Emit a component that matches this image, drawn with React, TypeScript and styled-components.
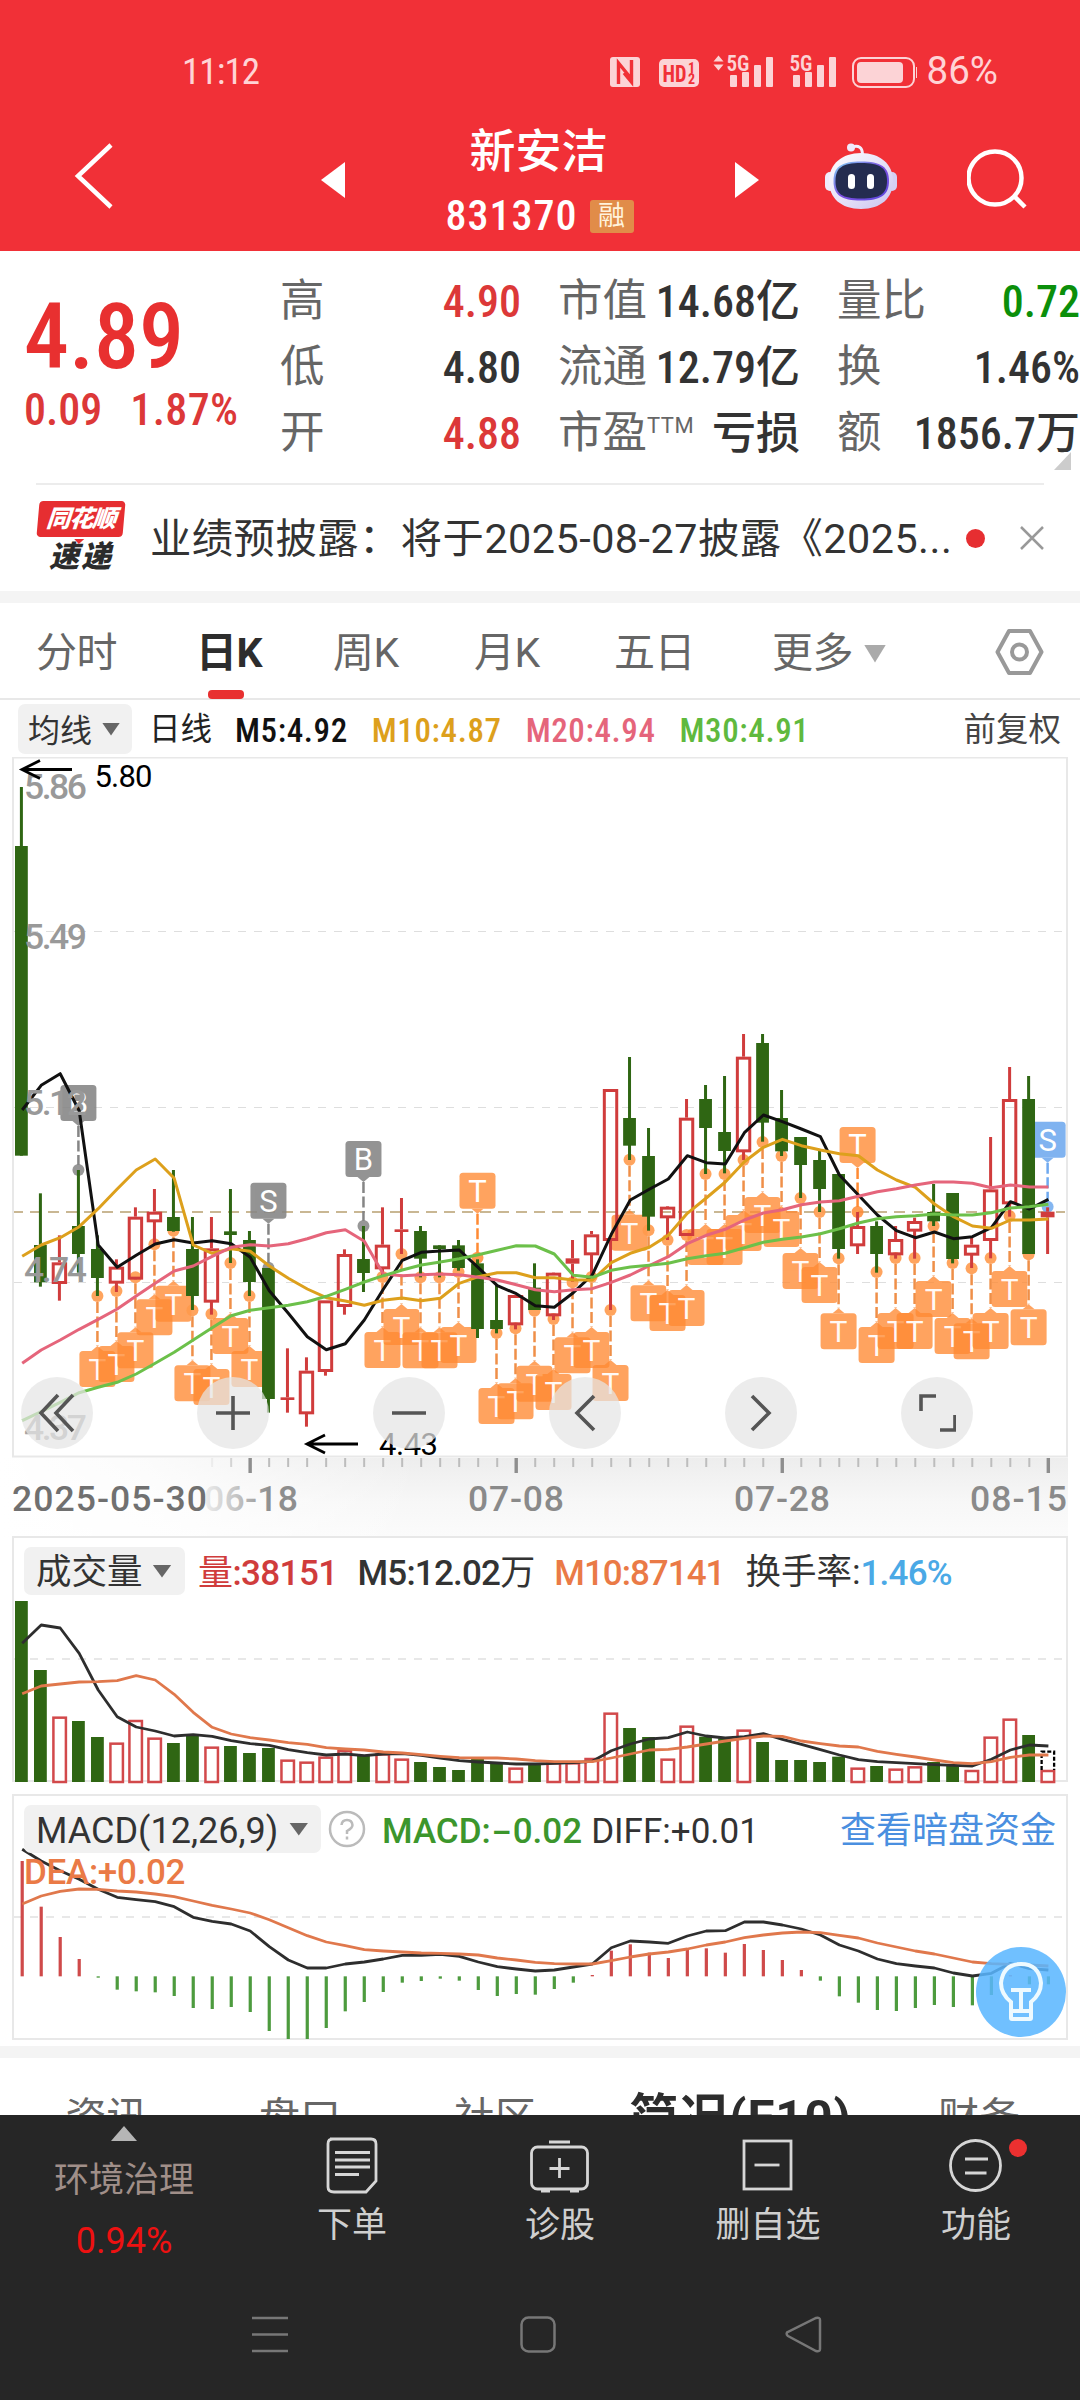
import React from "react";
import styled, { createGlobalStyle } from "styled-components";

const GlobalStyle = createGlobalStyle`
  * { box-sizing: border-box; }
  html, body { margin: 0; padding: 0; background: #fff; }
  svg { display: block; flex: none; }
`;

const NUM = `"Roboto Condensed", Roboto, "Noto Sans CJK SC", sans-serif`;
const SANS = `Roboto, "Noto Sans CJK SC", sans-serif`;

/* ---------- shared ---------- */

const Screen = styled.div`
  width: 1080px;
  height: 2400px;
  overflow: hidden;
  display: flex;
  flex-direction: column;
  background: #fff;
  color: #333;
  font-family: ${SANS};
  & > * { flex: none; }
`;

const Label = styled.span<{ $size: number; $color?: string; $weight?: number; $ls?: number; $ml?: number; $cond?: boolean }>`
  font-family: ${(p) => (p.$cond ? NUM : SANS)};
  font-stretch: ${(p) => (p.$cond ? "75%" : "100%")};
  font-size: ${(p) => p.$size}px;
  line-height: 1;
  color: ${(p) => p.$color ?? "inherit"};
  font-weight: ${(p) => p.$weight ?? 400};
  letter-spacing: ${(p) => p.$ls ?? 0}px;
  margin-left: ${(p) => p.$ml ?? 0}px;
  white-space: nowrap;
`;

const Regular = styled.span`
  font-weight: 400;
`;

const Dash = styled.span`
  display: inline-block;
  transform: scaleX(1.7);
  margin: 0 5px;
`;

const Band = styled.div`
  height: 12px;
  background: #f4f4f4;
`;

const Caret = styled.i<{ $w: number; $h: number; $color: string }>`
  width: ${(p) => p.$w}px;
  height: ${(p) => p.$h}px;
  background: ${(p) => p.$color};
  clip-path: polygon(0 0, 100% 0, 50% 100%);
`;

/* ---------- header ---------- */

const Header = styled.header`
  height: 251px;
  background: #f13037;
  color: #fff;
`;

const StatusBar = styled.div`
  height: 112px;
  padding: 31px 82px 0 182px;
  display: flex;
  justify-content: space-between;
  align-items: center;
  color: #ffd3d5;
`;

const StatusRight = styled.div`
  display: flex;
  align-items: center;
  gap: 10px;
`;

const TitleRow = styled.div`
  height: 139px;
  display: grid;
  grid-template-columns: 321px 24px 390px 24px 66px 73px 69px 60px;
  align-items: center;
`;

const BackSlot = styled.div`
  padding-left: 74px;
  padding-bottom: 11px;
`;

const IconSlot = styled.div<{ $pb?: number }>`
  padding-bottom: ${(p) => p.$pb ?? 0}px;
`;

const TitleBlock = styled.div`
  height: 139px;
  padding: 16px 3px 0 0;
  display: flex;
  flex-direction: column;
  align-items: center;
`;

const CodeLine = styled.div`
  height: 36px;
  margin-top: 24px;
  margin-left: 2px;
  display: flex;
  align-items: center;
  gap: 12px;
`;

const MarginTag = styled.span`
  width: 44px;
  height: 33px;
  border-radius: 3px;
  background: #e18c49;
  color: #fff3dc;
  font-size: 27px;
  line-height: 32px;
  text-align: center;
`;

const StatusIcons = () => (
  <svg width="308" height="46" viewBox="607 48 308 46" fill="#fcd3d6" fontFamily={NUM}>
    <rect x="608" y="56" width="30" height="30" rx="3" />
    <path d="M616.5 83V62L629.500 78M629.500 59V81L622 72" fill="none" stroke="#f13037" strokeWidth="3.400" />
    <rect x="657" y="58" width="40" height="28" rx="5" />
    <text x="660.500" y="80.500" fontSize="23" fontWeight="700" fill="#f13037" textLength="24" lengthAdjust="spacingAndGlyphs">HD</text>
    <text x="686" y="71.500" fontSize="14" fontWeight="700" fill="#f13037">1</text>
    <text x="686" y="83" fontSize="14" fontWeight="700" fill="#f13037">2</text>
    <path d="M711.500 60.500h10l-5-6zM711.500 63.500h10l-5 6z" />
    <text x="724.500" y="69.500" fontSize="22" fontWeight="600" textLength="23" lengthAdjust="spacingAndGlyphs">5G</text>
    <text x="787.500" y="69.500" fontSize="22" fontWeight="600" textLength="23" lengthAdjust="spacingAndGlyphs">5G</text>
    {[728, 791].map((x) => (
      <g key={x}>
        <rect x={x} y="74" width="7" height="12" rx="1" />
        <rect x={x + 12} y="71" width="7" height="15" rx="1" />
        <rect x={x + 24} y="64" width="7" height="22" rx="1" />
        <rect x={x + 36} y="56" width="7" height="30" rx="1" />
      </g>
    ))}
    <rect x="851" y="57" width="61" height="29" rx="8" fill="none" stroke="#fcd3d6" strokeWidth="2" />
    <rect x="855" y="61" width="46" height="21" rx="4" />
    <rect x="914" y="66" width="2" height="11" />
  </svg>
);

const Robot = () => (
  <svg width="73" height="70" viewBox="825 142 73 70">
    <defs>
      <linearGradient id="shell" x1="0" y1="0" x2="1" y2="1">
        <stop offset="0" stopColor="#ffffff" />
        <stop offset="0.600" stopColor="#e2ddf7" />
        <stop offset="1" stopColor="#c9c2ee" />
      </linearGradient>
      <linearGradient id="visor" x1="0" y1="0" x2="1" y2="1">
        <stop offset="0" stopColor="#7fd4f5" />
        <stop offset="0.500" stopColor="#7d4fe0" />
        <stop offset="1" stopColor="#5a49dd" />
      </linearGradient>
    </defs>
    <path d="M852 147Q862 144 862.500 154" fill="none" stroke="#f3effd" strokeWidth="3" />
    <circle cx="851" cy="147.500" r="4" fill="#efeafc" />
    <rect x="825" y="172" width="10" height="19" rx="5" fill="#efecfb" />
    <rect x="887" y="172" width="10" height="19" rx="5" fill="#d5cff3" />
    <path d="M861 153C880 153 893 164 893 181S881 209 861 209S829 198 829 181S842 153 861 153Z" fill="url(#shell)" />
    <path d="M861 161.500C881 161.500 889 167 889 181S881 200.500 861 200.500S833.500 195 833.500 181S841 161.500 861 161.500Z" fill="url(#visor)" />
    <path d="M861 163C880 163 887 168 887 181S880 198.500 861 198.500S835.500 194 835.500 181S842 163 861 163Z" fill="#242c50" />
    <rect x="848" y="174" width="7" height="15" rx="3.500" fill="#fff" />
    <rect x="867" y="174" width="7" height="15" rx="3.500" fill="#fff" />
  </svg>
);

/* ---------- quote ---------- */

const Quote = styled.section`
  height: 232px;
  padding: 17px 0 0 24px;
  display: grid;
  grid-template-columns: 256px 241px 279px 242px;
`;

const PriceBlock = styled.div`
  display: flex;
  flex-direction: column;
  padding-top: 25px;
`;

const ChangeLine = styled.div`
  display: flex;
  gap: 28px;
  margin-top: 5px;
`;

const StatCol = styled.div<{ $pl: number; $mr?: number }>`
  padding-left: ${(p) => p.$pl}px;
  margin-right: ${(p) => p.$mr ?? 0}px;
  display: flex;
  flex-direction: column;
`;

const StatRow = styled.div`
  height: 66px;
  padding-top: 1px;
  display: flex;
  align-items: center;
  justify-content: space-between;
`;

const Sup = styled.sup`
  font-size: 22px;
  line-height: 0;
  vertical-align: 15px;
  letter-spacing: 0.5px;
`;

const CornerMark = styled.i`
  width: 17px;
  height: 18px;
  margin: -14px 9px 0 auto;
  background: #ccc;
  clip-path: polygon(100% 0, 100% 100%, 0 100%);
`;

const Stat = ({ name, value, color = "#333", sup }: { name: string; value: string; color?: string; sup?: string }) => (
  <StatRow>
    <Label $size={44.5} $color="#666">
      {name}
      {sup && <Sup>{sup}</Sup>}
    </Label>
    <Label $size={44} $cond $weight={500} $color={color}>{value}</Label>
  </StatRow>
);

/* ---------- news ---------- */

const News = styled.section`
  height: 108px;
  margin: 0 36px;
  border-top: 2px solid #ececec;
  display: flex;
  align-items: center;
  & > span { padding-top: 3px; }
`;

const Logo = styled.div`
  width: 90px;
  height: 74px;
  display: flex;
  flex-direction: column;
  align-items: center;
`;

const LogoTop = styled.div`
  position: relative;
  width: 86px;
  height: 38px;
  border-radius: 4px;
  background: #e62e31;
  color: #fff;
  font: italic 900 24px/36px ${SANS};
  text-align: center;
  letter-spacing: -1px;
  transform: skewX(-5deg);
  &::after {
    content: "";
    position: absolute;
    left: 38px;
    top: 38px;
    border: 5px solid transparent;
    border-top-color: #e62e31;
  }
`;

const LogoBottom = styled.div`
  color: #2b2b2b;
  font: italic 900 30px/40px ${SANS};
  letter-spacing: 2px;
`;

const NewsDot = styled.i`
  width: 19px;
  height: 19px;
  border-radius: 50%;
  background: #e62e31;
  margin-left: 14px;
`;

/* ---------- tabs ---------- */

const Tabs = styled.nav`
  height: 97px;
  border-bottom: 2px solid #e8e8e8;
  padding-left: 36px;
  display: flex;
`;

const Tab = styled.div<{ $w: number; $on?: boolean; $pt?: number }>`
  width: ${(p) => p.$w}px;
  height: 97px;
  padding-top: ${(p) => p.$pt ?? 4}px;
  position: relative;
  display: flex;
  align-items: center;
  gap: 11px;
  font-size: 41px;
  line-height: 1;
  letter-spacing: -0.5px;
  color: ${(p) => (p.$on ? "#2d2d2d" : "#666")};
  font-weight: ${(p) => (p.$on ? 700 : 400)};
  &::after {
    content: "";
    display: ${(p) => (p.$on ? "block" : "none")};
    position: absolute;
    left: 12px;
    bottom: 1px;
    width: 36px;
    height: 9px;
    border-radius: 4px;
    background: #e83030;
  }
`;

/* ---------- indicators ---------- */

const MaRow = styled.div`
  height: 57px;
  padding: 4px 19px 0 18px;
  display: flex;
  align-items: flex-start;
`;

const Chip = styled.div<{ $w: number; $h: number; $gap: number; $pl: number }>`
  width: ${(p) => p.$w}px;
  height: ${(p) => p.$h}px;
  padding-left: ${(p) => p.$pl}px;
  border-radius: 7px;
  background: #f1f1f1;
  display: flex;
  align-items: center;
  gap: ${(p) => p.$gap}px;
  flex: none;
  & > span { padding-top: 3px; }
`;

const MaValues = styled.div`
  height: 50px;
  padding-top: 2px;
  flex: 1;
  display: flex;
  align-items: center;
`;

const Spacer = styled.div`
  flex: 1;
`;

const ChartArea = styled.div`
  position: relative;
  height: 699px;
`;

const ToolBar = styled.div`
  position: absolute;
  left: 21px;
  top: 620px;
  display: flex;
  gap: 104px;
`;

const ToolButton = styled.button`
  width: 72px;
  height: 72px;
  border: 0;
  border-radius: 50%;
  padding: 0;
  background: rgba(229, 229, 229, 0.72);
  display: flex;
  align-items: center;
  justify-content: center;
`;

const Axis = styled.div`
  height: 80px;
`;

const Panel = styled.section<{ $h: number }>`
  position: relative;
  height: ${(p) => p.$h}px;
  margin: 0 13px;
  & > svg { position: absolute; left: -13px; top: 0; }
`;

const PanelHead = styled.div`
  position: relative;
  padding: 11px 11px 0 11px;
  display: flex;
  align-items: center;
  height: 59px;
  & > span { padding-top: 4px; }
`;

const DeaLine = styled.div`
  position: relative;
  padding: 3px 11px 0;
  display: flex;
  height: 35px;
  align-items: center;
`;

const HelpIcon = styled.svg`
  margin-left: 7px;
`;

const HintButton = styled.button`
  position: absolute;
  right: 1px;
  top: 153px;
  width: 90px;
  height: 90px;
  border: 0;
  padding: 0;
  border-radius: 50%;
  background: rgba(88, 182, 255, 0.86);
  display: flex;
  align-items: center;
  justify-content: center;
`;

const ChartSvg = styled.svg`
  position: absolute;
  left: 0;
  top: 0;
`;

const X0 = 21.4;
const STEP = 19.004;
const xAt = (i: number) => X0 + STEP * i;

// kind, high, low, body top, body bottom; units are thirds of a pixel
type Candle = ["g" | "r", number, number, number, number];
const candles: Candle[] = [
  ["g", -999, 107, -822, 107], ["g", 220, 500, 375, 487], ["r", 346, 542, 427, 489], ["g", 150, 458, 318, 402],
  ["g", 346, 528, 387, 474], ["r", 418, 516, 440, 488], ["r", 262, 478, 290, 476], ["r", 207, 372, 275, 304],
  ["g", 150, 335, 291, 333], ["g", 291, 570, 387, 528], ["r", 291, 584, 385, 545], ["g", 207, 429, 334, 345],
  ["g", 333, 528, 360, 486], ["g", 444, 878, 444, 837], ["r", 685, 878, 832, 840], ["r", 712, 920, 752, 880],
  ["r", 541, 767, 541, 753], ["r", 388, 584, 402, 558], ["g", 318, 516, 417, 459], ["r", 262, 470, 374, 445],
  ["r", 234, 402, 328, 336], ["g", 318, 472, 333, 416], ["g", 376, 472, 376, 387], ["g", 360, 452, 376, 444],
  ["g", 418, 654, 430, 627], ["g", 495, 640, 600, 627], ["r", 525, 628, 525, 613], ["g", 430, 570, 503, 570],
  ["r", 457, 600, 458, 586], ["r", 360, 485, 415, 431], ["r", 333, 470, 343, 403], ["r", -93, 570, -93, 360],
  ["g", -189, 120, -6, 77], ["g", 24, 332, 108, 290], ["r", 258, 360, 260, 292], ["r", -63, 346, -7, 345],
  ["g", -105, 162, -63, 24], ["g", -132, 160, 36, 93], ["r", -258, 120, -190, 94], ["g", -258, 65, -231, 8],
  ["g", -90, 108, -6, 94], ["g", 51, 234, 51, 135], ["g", 93, 276, 120, 207], ["g", 162, 416, 162, 387],
  ["r", 276, 402, 318, 376], ["g", 304, 458, 318, 402], ["r", 318, 416, 357, 403], ["r", 293, 416, 303, 332],
  ["g", 192, 318, 276, 304], ["g", 219, 430, 219, 417], ["r", 350, 444, 374, 404], ["r", 51, 415, 208, 360],
  ["r", -159, 290, -63, 250], ["g", -132, 402, -63, 402], ["r", 262, 402, 275, 292],
];

const ma5 = [-30, -104, -139, -28, 375, 442, 406, 372, 359, 369, 362, 371, 412, 512, 580, 650, 689, 671, 600, 508, 421, 397, 393, 390, 443, 497, 521, 557, 562, 518, 465, 343, 240, 208, 177, 107, 128, 132, 38, -15, 5, 27, 50, 165, 225, 285, 332, 353, 336, 356, 350, 323, 245, 267, 238];
const ma10 = [409, 375, 353, 320, 266, 207, 150, 117, 175, 375, 400, 386, 394, 438, 475, 507, 533, 543, 556, 541, 534, 542, 535, 490, 470, 458, 458, 473, 473, 480, 480, 428, 400, 382, 346, 280, 234, 186, 125, 82, 58, 77, 90, 101, 107, 150, 180, 202, 252, 290, 318, 325, 300, 300, 297];
const ma20 = [730, 690, 660, 628, 598, 567, 528, 490, 453, 438, 409, 382, 374, 378, 371, 356, 338, 329, 364, 462, 467, 464, 462, 464, 472, 480, 494, 509, 515, 509, 506, 487, 465, 437, 410, 371, 346, 328, 300, 279, 269, 254, 246, 242, 229, 215, 206, 195, 186, 186, 190, 203, 195, 201, 201];
const ma30 = [902, 875, 847, 818, 802, 787, 762, 730, 697, 660, 623, 587, 571, 563, 556, 545, 529, 508, 486, 467, 450, 435, 426, 416, 404, 391, 377, 378, 402, 466, 472, 451, 441, 436, 430, 416, 407, 400, 383, 367, 358, 351, 341, 326, 309, 296, 290, 287, 282, 285, 285, 278, 264, 260, 253];

// index of the candle and the height of its dot
const tradesBelow: [number, number][] = [
  [4, 528], [5, 513], [6, 472], [7, 373], [8, 332], [9, 571], [10, 582], [11, 429], [12, 528],
  [19, 471], [20, 402], [21, 472], [22, 472], [23, 456], [25, 639], [26, 625], [27, 572], [28, 597],
  [29, 487], [30, 471], [31, 570], [32, 119], [33, 331], [34, 360], [35, 345], [36, 162], [37, 162],
  [38, 120], [39, 66], [40, 108], [41, 234], [42, 276], [43, 415], [45, 456], [46, 414], [47, 414],
  [48, 318], [49, 429], [50, 445], [51, 414], [52, 288], [53, 403],
];
const tradesAbove: [number, number, string, string][] = [
  [3, 150, "B", "#858585"], [13, 443, "S", "#858585"], [18, 318, "B", "#858585"], [24, 413, "T", "#ff8a33"], [44, 276, "T", "#ff8a33"], [54, 260, "S", "#6fa9ef"],
];

const kY = (v: number) => 363 + v / 3;
const vY = (v: number) => v / 3 - 6;
const mY = (v: number) => v / 3 - 264;

const path = (data: number[], y: (v: number) => number) =>
  data.map((v, i) => `${i ? "L" : "M"}${(xAt(i) + 0.8).toFixed(1)} ${y(v).toFixed(1)}`).join("");

const GREEN = "#2f6613";
const RED = "#d03c3c";

const BadgeBelow = ({ i, v }: { i: number; v: number }) => {
  const x = xAt(i);
  const y = kY(v);
  return (
    <g>
      <path d={`M${x} ${y + 6}V${y + 50}`} stroke="#fff" strokeWidth="2.500" />
      <path d={`M${x} ${y + 6}V${y + 50}`} stroke="#ef8f48" strokeWidth="2.500" strokeDasharray="11 3.500" />
      <circle cx={x} cy={y} r="6" fill="#ff9a4d" fillOpacity="0.900" />
      <g opacity="0.780">
        <path d={`M${x - 6} ${y + 55}L${x} ${y + 50}L${x + 6} ${y + 55}Z`} fill="#ff8a33" />
        <rect x={x - 18} y={y + 55} width="36" height="36" rx="3.500" fill="#ff8a33" />
      </g>
      <text x={x} y={y + 84} fontSize="30" fill="#fff" fillOpacity="0.950" textAnchor="middle">T</text>
    </g>
  );
};

const BadgeAbove = ({ i, v, ch, color }: { i: number; v: number; ch: string; color: string }) => {
  const x = xAt(i);
  const y = kY(v);
  return (
    <g>
      <path d={`M${x} ${y - 44}V${y - 5}`} stroke={color} strokeWidth="2.500" strokeDasharray="11 3.500" />
      <circle cx={x} cy={y} r="6" fill={color} fillOpacity="0.850" />
      <g opacity={ch === "T" ? 0.78 : 0.88}>
        <path d={`M${x - 6} ${y - 49}L${x} ${y - 44}L${x + 6} ${y - 49}Z`} fill={color} />
        <rect x={x - 18} y={y - 85} width="36" height="36" rx="3.500" fill={color} />
      </g>
      <text x={x} y={y - 56} fontSize="31" fill="#fff" textAnchor="middle">{ch}</text>
    </g>
  );
};

const CandleChart = () => (
  <ChartSvg width="1080" height="780" viewBox="0 0 1080 780" fontFamily={SANS}>
    <defs>
      <linearGradient id="axisShade" x1="0" y1="0" x2="0" y2="1">
        <stop offset="0" stopColor="#ededed" />
        <stop offset="0.550" stopColor="#f7f7f7" />
        <stop offset="1" stopColor="#fbfbfb" />
      </linearGradient>
      <linearGradient id="axisFade" x1="0" y1="0" x2="1" y2="0">
        <stop offset="0" stopColor="#fff" />
        <stop offset="0.350" stopColor="#fff" stopOpacity="0.800" />
        <stop offset="1" stopColor="#fff" stopOpacity="0" />
      </linearGradient>
      <linearGradient id="dateFade" x1="204" y1="0" x2="298" y2="0" gradientUnits="userSpaceOnUse">
        <stop offset="0" stopColor="#ededed" />
        <stop offset="0.350" stopColor="#c4c4c4" />
        <stop offset="0.700" stopColor="#8e8e8e" />
      </linearGradient>
    </defs>
    <path d="M14 174.500H1065M14 350.500H1065M14 525.500H1065" stroke="#dedede" strokeWidth="1" strokeDasharray="8 8" fill="none" />
    <path d="M12 455H1065" stroke="#b8a070" strokeWidth="1.600" strokeDasharray="11 7" />
    {tradesBelow.map(([i, v]) => <BadgeBelow key={i} i={i} v={v} />)}
    {tradesAbove.map(([i, v, ch, c]) => <BadgeAbove key={i} i={i} v={v} ch={ch} color={c} />)}
    {candles.map(([kind, hi, lo, top, bot], i) => {
      const x = xAt(i);
      const h = (bot - top) / 3;
      if (kind === "g")
        return (
          <g key={i} fill={GREEN}>
            <rect x={x - 1.5} y={kY(hi)} width="3" height={(lo - hi) / 3} />
            <rect x={x - 6.4} y={kY(top)} width="12.800" height={h} />
          </g>
        );
      return (
        <g key={i} fill={RED}>
          <rect x={x - 1.5} y={kY(hi)} width="3" height={Math.max(0, (top - hi) / 3)} />
          <rect x={x - 1.5} y={kY(bot)} width="3" height={Math.max(0, (lo - bot) / 3)} />
          {h < 6 ? (
            <rect x={x - 6.9} y={kY(top)} width="13.800" height={h} />
          ) : (
            <rect x={x - 6.2} y={kY(top) + 1.5} width="12.400" height={h - 2} fill="none" stroke={RED} strokeWidth="3" />
          )}
        </g>
      );
    })}
    <g fill="none" strokeWidth="3" strokeLinejoin="round">
      <path d={path(ma5, kY)} stroke="#111" />
      <path d={path(ma10, kY)} stroke="#dda01c" />
      <path d={path(ma20, kY)} stroke="#e5657b" />
      <path d={path(ma30, kY)} stroke="#6cc04a" />
    </g>
    <rect x="13" y="0.500" width="1054" height="699" fill="none" stroke="#e8e8e8" strokeWidth="2" />
    <g fill="#999" fontSize="35.500" fontWeight="500">
      <text x="24" y="42" textLength="63">5.86</text>
      <text x="24" y="192" textLength="63">5.49</text>
      <text x="24" y="358" textLength="63">5.12</text>
      <text x="24" y="524.500" textLength="63">4.74</text>
      <text x="24" y="682.500" textLength="63" fillOpacity="0.900">4.37</text>
    </g>
    <g fill="none" stroke="#000" strokeWidth="2.800">
      <path d="M72 12.500H22M40 3.500L22 12.500L40 21.500" />
      <path d="M358 687H307M325 678L307 687L325 696" />
    </g>
    <g fill="#000" fontSize="31">
      <text x="94.500" y="30" textLength="58">5.80</text>
      <text x="379" y="697.500" textLength="59">4.43</text>
    </g>
    {/* date axis */}
    <rect x="0" y="701" width="1068" height="79" fill="url(#axisShade)" />
    <rect x="0" y="701" width="420" height="79" fill="url(#axisFade)" />
    {Array.from({ length: 45 }, (_, k) => k + 10).map((i) => {
      const major = [12, 26, 40, 54].includes(i);
      return (
        <rect key={i} x={xAt(i) - (major ? 1 : 0.3)} y="701" width={major ? 3.4 : 2} height={major ? 15 : 9}
          fill={major ? "#8e8e8e" : "#bdbdbd"} fillOpacity={i === 10 ? 0.2 : i === 11 ? 0.6 : 1} />
      );
    })}
    <g fontSize="35.500" fontWeight="500" fill="#8a8a8a">
      <text x="204" y="754" textLength="94" fill="url(#dateFade)">06-18</text>
      <text x="468" y="754" textLength="96">07-08</text>
      <text x="734" y="754" textLength="96">07-28</text>
      <text x="970" y="754" textLength="97">08-15</text>
      <text x="12" y="754" textLength="195" fill="#707070">2025-05-30</text>
    </g>
  </ChartSvg>
);

const volume: ["g" | "r", number][] = [
  ["g", 213], ["g", 420], ["r", 560], ["g", 573], ["g", 621], ["r", 638], ["r", 570], ["r", 623], ["g", 639], ["g", 618], ["r", 650],
  ["g", 648], ["g", 669], ["g", 654], ["r", 689], ["r", 695], ["r", 680], ["r", 660], ["g", 678], ["r", 670], ["r", 686], ["g", 696],
  ["g", 711], ["g", 720], ["g", 687], ["g", 702], ["r", 713], ["g", 702], ["r", 697], ["r", 697], ["r", 684], ["r", 548], ["g", 594],
  ["g", 621], ["r", 686], ["r", 587], ["g", 620], ["g", 625], ["r", 599], ["g", 636], ["g", 690], ["g", 690], ["g", 696], ["g", 680],
  ["r", 713], ["g", 708], ["r", 716], ["r", 709], ["g", 696], ["g", 705], ["r", 720], ["r", 620], ["r", 566], ["g", 615], ["r", 720],
];
const vol5 = [340, 285, 294, 370, 480, 560, 591, 603, 618, 614, 619, 632, 641, 646, 659, 668, 675, 672, 677, 672, 671, 676, 684, 692, 696, 699, 702, 702, 700, 698, 694, 662, 642, 627, 623, 606, 618, 624, 620, 611, 628, 643, 659, 675, 689, 695, 698, 701, 704, 706, 708, 688, 660, 645, 648];
const vol10 = [491, 468, 462, 456, 455, 452, 437, 450, 493, 547, 592, 612, 623, 630, 638, 643, 653, 657, 660, 666, 669, 674, 679, 683, 684, 684, 687, 692, 695, 695, 695, 684, 672, 660, 658, 651, 642, 633, 625, 618, 619, 633, 641, 648, 651, 664, 673, 681, 690, 698, 701, 695, 682, 675, 675];

const VolumeChart = () => (
  <svg width="1080" height="248" viewBox="0 0 1080 248">
    <rect x="13" y="1" width="1054" height="244" fill="#fff" stroke="#e8e8e8" strokeWidth="2" />
    <path d="M14 123H1065" stroke="#e8e8e8" strokeWidth="2" strokeDasharray="8 8" />
    {volume.map(([k, v], i) =>
      k === "g" ? (
        <rect key={i} x={xAt(i) - 6.4} y={vY(v)} width="12.800" height={(756 - v) / 3} fill={GREEN} />
      ) : (
        <rect key={i} x={xAt(i) - 6} y={vY(v) + 1} width="12.500" height={(756 - v) / 3 - 1} fill="#fff" stroke="#d2494b" strokeWidth="2.500" />
      )
    )}
    <path d={`M${xAt(54) - 6} ${vY(720)}V${vY(665)}H${xAt(54) + 6.5}V${vY(720)}`} fill="none" stroke="#000" strokeWidth="2.300" strokeDasharray="4 2" />
    <g fill="none" strokeWidth="2.800" strokeLinejoin="round">
      <path d={path(vol5, vY)} stroke="#2e2e2e" />
      <path d={path(vol10, vY)} stroke="#e0784c" />
    </g>
  </svg>
);

const hist = [993, 1130, 1221, 1287, 1343, 1379, 1384, 1387, 1398, 1434, 1437, 1431, 1446, 1503, 1527, 1527, 1494, 1444, 1416, 1386, 1358, 1353, 1346, 1352, 1380, 1398, 1392, 1394, 1377, 1358, 1335, 1262, 1243, 1268, 1284, 1255, 1255, 1268, 1242, 1260, 1290, 1320, 1352, 1399, 1418, 1440, 1443, 1434, 1425, 1431, 1426, 1395, 1336, 1363, 1363];
const diff = [958, 993, 1022, 1048, 1078, 1102, 1109, 1115, 1130, 1162, 1174, 1182, 1203, 1250, 1290, 1314, 1314, 1302, 1296, 1287, 1276, 1276, 1273, 1279, 1296, 1310, 1317, 1323, 1320, 1311, 1302, 1253, 1233, 1236, 1240, 1218, 1203, 1202, 1176, 1176, 1185, 1197, 1215, 1245, 1263, 1287, 1301, 1308, 1314, 1329, 1338, 1330, 1300, 1316, 1320];
const dea = [1122, 1098, 1084, 1077, 1078, 1083, 1086, 1092, 1100, 1113, 1126, 1137, 1149, 1169, 1193, 1217, 1236, 1247, 1259, 1263, 1266, 1269, 1270, 1272, 1275, 1284, 1290, 1297, 1301, 1302, 1302, 1292, 1281, 1272, 1266, 1257, 1245, 1236, 1223, 1215, 1209, 1206, 1208, 1216, 1224, 1239, 1251, 1263, 1272, 1284, 1296, 1301, 1303, 1305, 1308];

const MacdChart = () => (
  <svg width="1080" height="250" viewBox="0 0 1080 250">
    <rect x="13" y="1" width="1054" height="244" fill="#fff" stroke="#e8e8e8" strokeWidth="2" />
    <path d="M14 123H1065" stroke="#e8e8e8" strokeWidth="2" strokeDasharray="8 8" />
    {hist.map((v, i) => {
      const top = Math.min(v, 1339);
      const up = v < 1339;
      return (
        <rect key={i} x={xAt(i) - 0.8} y={mY(top)} width="3.200" height={Math.abs(v - 1339) / 3} fill={up ? "#cf4a4a" : "#4d9b3e"} />
      );
    })}
    <g fill="none" strokeWidth="2.800" strokeLinejoin="round">
      <path d={path(diff, mY)} stroke="#2e2e2e" />
      <path d={path(dea, mY)} stroke="#e0784c" />
    </g>
  </svg>
);

/* ---------- lower tabs and bottom bar ---------- */

const LowerTabs = styled.div`
  height: 57px;
  overflow: hidden;
  padding-top: 38px;
  display: flex;
`;

const LowerTab = styled.div<{ $w: number; $on?: boolean }>`
  width: ${(p) => p.$w}px;
  text-align: center;
  font-size: ${(p) => (p.$on ? 49 : 41)}px;
  letter-spacing: ${(p) => (p.$on ? 1 : 0)}px;
  line-height: 44px;
  font-weight: ${(p) => (p.$on ? 700 : 400)};
  color: ${(p) => (p.$on ? "#2d2d2d" : "#666")};
  white-space: nowrap;
`;

const Bottom = styled.footer`
  height: 285px;
  background: #262626;
`;

const Actions = styled.div`
  height: 170px;
  display: flex;
`;

const Sector = styled.div`
  width: 248px;
  padding-top: 11px;
  display: flex;
  flex-direction: column;
  align-items: center;
  gap: 25px;
`;

const UpMark = styled.i`
  width: 26px;
  height: 15px;
  background: #b5b5b5;
  clip-path: polygon(50% 0, 100% 100%, 0 100%);
  margin-bottom: -3px;
`;

const Action = styled.div`
  position: relative;
  width: 208px;
  padding-top: 20px;
  display: flex;
  flex-direction: column;
  align-items: center;
  gap: 8px;
  color: #cfcfcf;
  font-size: 35px;
  line-height: 46px;
`;

const Alert = styled.i`
  position: absolute;
  left: 137px;
  top: 24px;
  width: 18px;
  height: 18px;
  border-radius: 50%;
  background: #ec3030;
`;

const SystemNav = styled.div`
  display: flex;
  padding: 29px 0 0 252px;
`;

const NavSlot = styled.div<{ $w: number }>`
  width: ${(p) => p.$w}px;
`;

const actionIcons: Record<string, React.ReactNode> = {
  order: (
    <>
      <path d="M10 4H51Q56 4 56 9V46L46 57H14Q8 57 8 52V9Q8 4 13 4Z" />
      <path d="M15 17.500H50M15 25H50M15 32H50M15 39.500H39" />
    </>
  ),
  diagnose: (
    <>
      <rect x="3.500" y="12" width="56" height="42" rx="6" />
      <path d="M21 7H42M31.500 23V43M21.500 33.500H41.500M13 56H22M42 56H51" />
    </>
  ),
  remove: (
    <>
      <rect x="8" y="6" width="47" height="48" />
      <path d="M18.500 30H43.500" />
    </>
  ),
  more: (
    <>
      <circle cx="31.500" cy="30.500" r="25" />
      <path d="M21 24H44M21 38H42.500" />
    </>
  ),
};

const App = () => (
  <Screen>
    <GlobalStyle />
    <Header>
      <StatusBar>
        <Label $size={37} $cond $ls={-0.9}>11:12</Label>
        <StatusRight>
          <StatusIcons />
          <Label $size={38.5}>86%</Label>
        </StatusRight>
      </StatusBar>
      <TitleRow>
        <BackSlot>
          <svg width="42" height="66" viewBox="0 0 42 66" fill="none" stroke="#fff" strokeWidth="4.500">
            <path d="M37 2L4 33L37 64" />
          </svg>
        </BackSlot>
        <IconSlot $pb={4}>
          <svg width="24" height="36" viewBox="0 0 24 36" fill="#fff"><path d="M24 0V36L0 18Z" /></svg>
        </IconSlot>
        <TitleBlock>
          <Label $size={46} $weight={500}>新安洁</Label>
          <CodeLine>
            <Label $size={42} $cond $weight={500} $ls={1}>831370</Label>
            <MarginTag>融</MarginTag>
          </CodeLine>
        </TitleBlock>
        <IconSlot $pb={4}>
          <svg width="24" height="36" viewBox="0 0 24 36" fill="#fff"><path d="M0 0V36L24 18Z" /></svg>
        </IconSlot>
        <span />
        <IconSlot $pb={10}>
          <Robot />
        </IconSlot>
        <span />
        <IconSlot $pb={6}>
          <svg width="60" height="60" viewBox="0 0 60 60" fill="none" stroke="#fff" strokeWidth="4.500">
            <circle cx="28" cy="29" r="26.500" />
            <path d="M47 47L58 58" />
          </svg>
        </IconSlot>
      </TitleRow>
    </Header>

    <Quote>
      <PriceBlock>
        <Label $size={90} $cond $weight={500} $color="#e83030">4.89</Label>
        <ChangeLine>
          <Label $size={44} $cond $weight={500} $color="#dc3838">0.09</Label>
          <Label $size={44} $cond $weight={500} $ls={0.4} $color="#dc3838">1.87%</Label>
        </ChangeLine>
      </PriceBlock>
      <StatCol $pl={0}>
        <Stat name="高" value="4.90" color="#dc3838" />
        <Stat name="低" value="4.80" />
        <Stat name="开" value="4.88" color="#dc3838" />
      </StatCol>
      <StatCol $pl={37}>
        <Stat name="市值" value="14.68亿" />
        <Stat name="流通" value="12.79亿" />
        <Stat name="市盈" sup="TTM" value="亏损" />
      </StatCol>
      <StatCol $pl={37} $mr={-38}>
        <Stat name="量比" value="0.72" color="#0b8f0b" />
        <Stat name="换" value="1.46%" />
        <Stat name="额" value="1856.7万" />
        <CornerMark />
      </StatCol>
    </Quote>

    <News>
      <Logo>
        <LogoTop>同花顺</LogoTop>
        <LogoBottom>速递</LogoBottom>
      </Logo>
      <Label $size={41.3} $ml={24} $ls={0.5}>业绩预披露：将于2025-08-27披露《2025...</Label>
      <NewsDot />
      <Spacer />
      <svg width="24" height="24" viewBox="0 0 24 24" stroke="#999" strokeWidth="2.500"><path d="M1 1L23 23M23 1L1 23" /></svg>
    </News>
    <Band />

    <Tabs>
      <Tab $w={160}>分时</Tab>
      <Tab $w={137} $on>日K</Tab>
      <Tab $w={141}>周K</Tab>
      <Tab $w={140}>月K</Tab>
      <Tab $w={158}>五日</Tab>
      <Tab $w={223}>更多<Caret $w={22} $h={18} $color="#aaa" /></Tab>
      <Tab $w={50} $pt={0}>
        <svg width="49" height="48" viewBox="0 0 49 48" fill="none" stroke="#999" strokeWidth="4">
          <path d="M14 3H35L46.500 24L35 45H14L2.500 24Z" strokeLinejoin="round" />
          <circle cx="24.500" cy="24" r="7.500" />
        </svg>
      </Tab>
    </Tabs>

    <MaRow>
      <Chip $w={114} $h={50} $pl={10} $gap={10}>
        <Label $size={32} $color="#333">均线</Label>
        <Caret $w={18} $h={13} $color="#666" />
      </Chip>
      <MaValues>
        <Label $size={31.5} $ml={17} $color="#222">日线</Label>
        <Label $size={33} $ml={23} $ls={0.6} $cond $weight={500} $color="#111">M5:4.92</Label>
        <Label $size={33} $ml={24} $ls={0.6} $cond $weight={500} $color="#dda01c">M10:4.87</Label>
        <Label $size={33} $ml={24} $ls={0.6} $cond $weight={500} $color="#e5657b">M20:4.94</Label>
        <Label $size={33} $ml={24} $ls={0.6} $cond $weight={500} $color="#5fb93e">M30:4.91</Label>
        <Spacer />
        <Label $size={32.5} $color="#444">前复权</Label>
      </MaValues>
    </MaRow>

    <ChartArea>
      <CandleChart />
      <ToolBar>
        {["M20 18L3 36L20 54M35 18L18 36L35 54", "M19 19V53M2 36H36", "M2 36H36", "M28 19L11 36L28 53", "M10 19L27 36L10 53", "M3 34V19H18M22 53H37V38"].map((d) => (
          <ToolButton key={d}>
            <svg width="38" height="72" viewBox="0 0 38 72" fill="none" stroke="#555" strokeWidth="3.600"><path d={d} /></svg>
          </ToolButton>
        ))}
      </ToolBar>
    </ChartArea>
    <Axis />

    <Panel $h={258}>
      <VolumeChart />
      <PanelHead>
        <Chip $w={161} $h={48} $pl={12} $gap={10}>
          <Label $size={35.5}>成交量</Label>
          <Caret $w={19} $h={13} $color="#666" />
        </Chip>
        <Label $size={35} $ml={13} $weight={500} $ls={-0.6} $color="#d03c3c"><Regular>量</Regular>:38151</Label>
        <Label $size={35} $ml={20} $weight={500} $ls={-0.8}>M5:12.02<Regular>万</Regular></Label>
        <Label $size={35} $ml={20} $weight={500} $ls={-1} $color="#ea7a46">M10:87141</Label>
        <Label $size={35.5} $ml={21}>换手率:</Label>
        <Label $size={35} $weight={500} $ls={-0.8} $color="#4aa9e6">1.46%</Label>
      </PanelHead>
    </Panel>

    <Panel $h={252}>
      <MacdChart />
      <PanelHead>
        <Chip $w={297} $h={48} $pl={12} $gap={11}>
          <Label $size={36}>MACD(12,26,9)</Label>
          <Caret $w={19} $h={13} $color="#666" />
        </Chip>
        <HelpIcon width="38" height="38" viewBox="0 0 38 38" fill="none" stroke="#bbb" strokeWidth="2.500">
          <circle cx="19" cy="19" r="17" />
          <path d="M13.500 15Q14 10 19 10T24.500 15Q24.500 18 19 21V24M19 26.500V29.500" />
        </HelpIcon>
        <Label $size={35} $ml={16} $weight={500} $color="#3c962c">MACD:<Dash>-</Dash>0.02</Label>
        <Label $size={35} $ml={9}>DIFF:+0.01</Label>
        <Spacer />
        <Label $size={36} $color="#4a8fe0">查看暗盘资金</Label>
      </PanelHead>
      <DeaLine>
        <Label $size={35} $weight={500} $ls={-0.3} $color="#ea7a46">DEA:+0.02</Label>
      </DeaLine>
      <HintButton>
        <svg width="46" height="62" viewBox="0 0 46 62" fill="none" stroke="#eefaff" strokeWidth="4">
          <path d="M13 57V41Q3 33 3 22Q5 3 23 3T43 22Q43 33 33 41V57Q33 58 32 58H14Q13 58 13 57ZM13 50H33M13 29H33M23 29V49" />
        </svg>
      </HintButton>
    </Panel>
    <Band />

    <LowerTabs>
      <LowerTab $w={213}>资讯</LowerTab>
      <LowerTab $w={174}>盘口</LowerTab>
      <LowerTab $w={216}>社区</LowerTab>
      <LowerTab $w={275} $on>简况(F10)</LowerTab>
      <LowerTab $w={202}>财务</LowerTab>
    </LowerTabs>

    <Bottom>
      <Actions>
        <Sector>
          <UpMark />
          <Label $size={35} $color="#a08f89">环境治理</Label>
          <Label $size={36} $color="#ee1111">0.94%</Label>
        </Sector>
        {[["order", "下单"], ["diagnose", "诊股"], ["remove", "删自选"], ["more", "功能"]].map(([id, name]) => (
          <Action key={id}>
            <svg width="65" height="60" viewBox="0 0 65 60" fill="none" stroke="#d6d6d6" strokeWidth="2.800">{actionIcons[id]}</svg>
            {name}
            {id === "more" && <Alert />}
          </Action>
        ))}
      </Actions>
      <SystemNav>
        <NavSlot $w={268}>
          <svg width="36" height="40" viewBox="0 0 36 40" stroke="#777" strokeWidth="2.500"><path d="M0 4H36M0 20.500H36M0 37H36" /></svg>
        </NavSlot>
        <NavSlot $w={265}>
          <svg width="36" height="40" viewBox="0 0 36 40" fill="none" stroke="#777" strokeWidth="2.500"><rect x="1.500" y="3.500" width="33" height="34" rx="7" /></svg>
        </NavSlot>
        <NavSlot $w={40}>
          <svg width="38" height="40" viewBox="0 0 38 40" fill="none" stroke="#777" strokeWidth="2.500"><path d="M2 18.500Q1 20.500 3 22L31 37Q35 38 35 35V6Q35 3 31 4Z" /></svg>
        </NavSlot>
      </SystemNav>
    </Bottom>
  </Screen>
);

export default App;
